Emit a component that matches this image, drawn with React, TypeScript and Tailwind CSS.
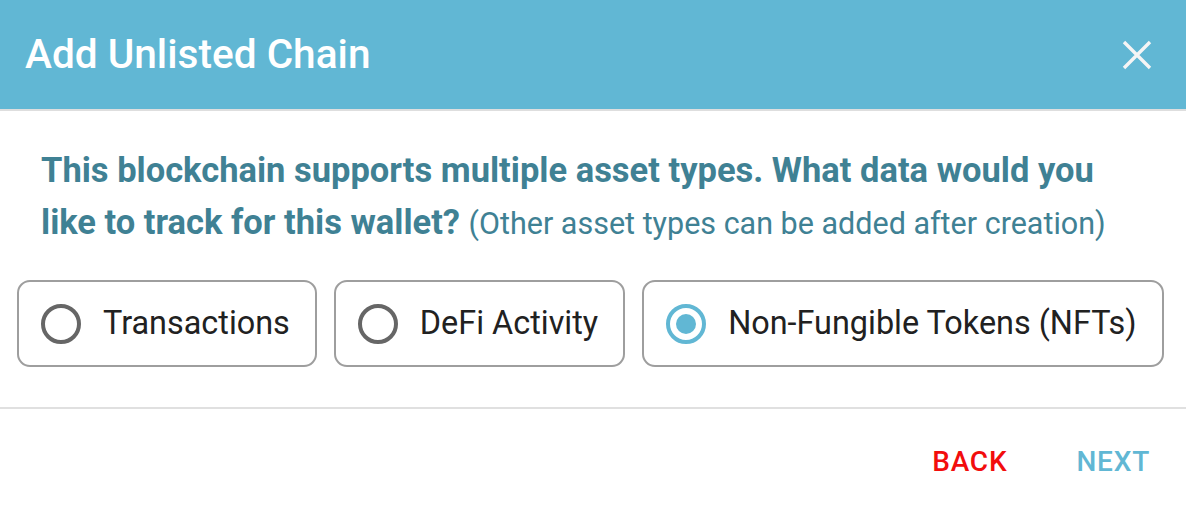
import React, { useState } from 'react';

const options = [
  { id: 'transactions', label: 'Transactions' },
  { id: 'defi', label: 'DeFi Activity' },
  { id: 'nfts', label: 'Non-Fungible Tokens (NFTs)' },
];

const Radio = ({ checked }: { checked: boolean }) => (
  <span
    className={`flex h-[40px] w-[40px] shrink-0 items-center justify-center rounded-full border-[4px] ${
      checked ? 'border-[#61b7d4]' : 'border-[#666666]'
    }`}
  >
    {checked && <span className="h-[20px] w-[20px] rounded-full bg-[#61b7d4]" />}
  </span>
);

export default function App() {
  const [selected, setSelected] = useState('nfts');

  return (
    <div className="flex h-[511px] w-[1186px] flex-col bg-white font-['Roboto',sans-serif]">
      <div className="flex h-[111px] items-center justify-between border-b-2 border-[#dedede] bg-[#61b7d4] pl-[25px] pr-[34px]">
        <h2 className="text-[40.6px] font-medium text-white">Add Unlisted Chain</h2>
        <button className="text-white" aria-label="Close">
          <svg width="30" height="30" viewBox="0 0 30 30" fill="none" stroke="#f5f5f5" strokeWidth="3.4">
            <path d="M2 2 L28 28 M28 2 L2 28" />
          </svg>
        </button>
      </div>

      <div className="border-b-2 border-[#e0e0e0] px-[17px] pt-[33px] pb-[40px]">
        <p className="px-[24px] text-[34.5px] leading-[52px] text-[#3f8194]">
          <span className="font-bold">
            This blockchain supports multiple asset types. What data would you like to track for this wallet?
          </span>{' '}
          <span className="text-[30.5px]">(Other asset types can be added after creation)</span>
        </p>

        <div className="mt-[30px] flex gap-[17px]">
          {options.map((o) => (
            <button
              key={o.id}
              onClick={() => setSelected(o.id)}
              className="flex h-[87px] shrink-0 items-center gap-[22px] rounded-[13px] border-2 border-[#9e9e9e] pl-[22px] pr-[25px]"
            >
              <Radio checked={selected === o.id} />
              <span className="whitespace-nowrap text-[32.4px] text-[#212121]">{o.label}</span>
            </button>
          ))}
        </div>
      </div>

      <div className="flex justify-end gap-[69px] pt-[32px] pr-[36px]">
        <button className="text-[28px] font-medium tracking-[0.8px] text-[#f20d0d]">BACK</button>
        <button className="text-[28px] font-medium tracking-[0.8px] text-[#61b7d4]">NEXT</button>
      </div>
    </div>
  );
}
